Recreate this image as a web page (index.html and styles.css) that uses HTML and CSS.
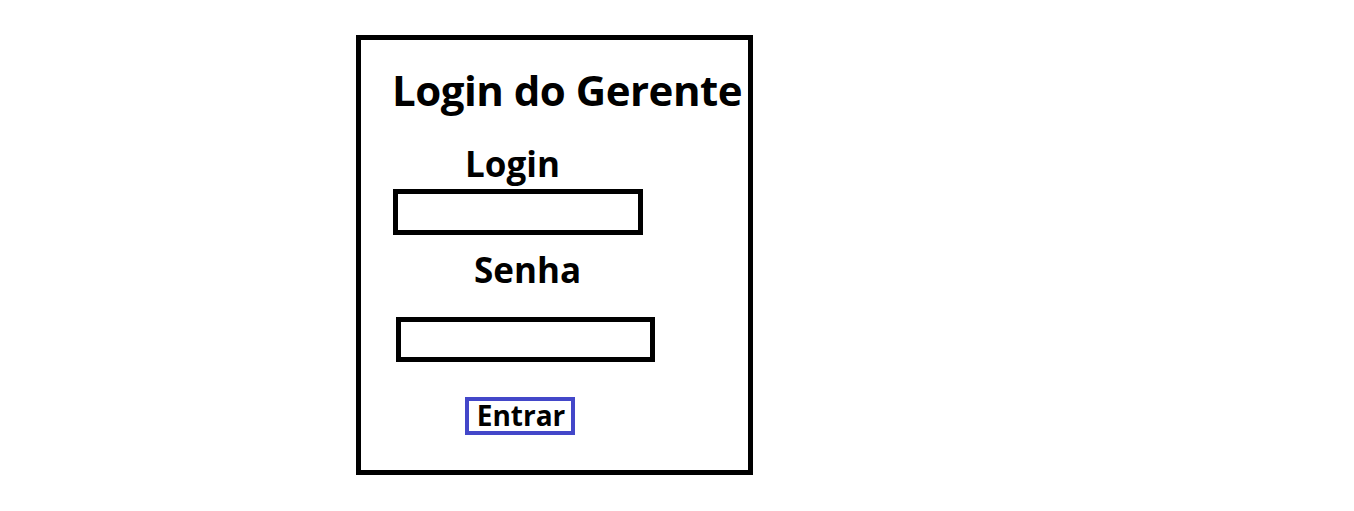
FILE: index.html
```html
<!DOCTYPE html>
<html lang="pt">
<head>
<meta charset="utf-8">
<title>Login do Gerente</title>
<link rel="stylesheet" href="styles.css">
</head>
<body>
<div class="card">
  <h1 class="title">Login do Gerente</h1>
  <div class="label label-login">Login</div>
  <div class="field field-login"></div>
  <div class="label label-senha">Senha</div>
  <div class="field field-senha"></div>
  <button class="btn" type="button">Entrar</button>
</div>
</body>
</html>
```

FILE: styles.css
```css
html, body {
  margin: 0;
  padding: 0;
  background: #fff;
}
body {
  font-family: "Open Sans", "Noto Sans", sans-serif;
  color: #000;
}
.card {
  box-sizing: border-box;
  margin: 35px 0 0 356px;
  width: 397px;
  height: 440px;
  border: 5px solid #000;
  display: flex;
  flex-direction: column;
  align-items: flex-start;
}
.title {
  margin: 29px 0 0 31px;
  font-size: 42px;
  line-height: 42px;
  font-weight: 700;
  letter-spacing: -0.5px;
  white-space: nowrap;
}
.label {
  font-size: 35px;
  line-height: 35px;
  font-weight: 700;
}
.label-login {
  margin: 35px 0 0 104px;
}
.label-senha {
  margin: 17px 0 0 113px;
}
.field {
  box-sizing: border-box;
  border: 5px solid #000;
  background: #fff;
}
.field-login {
  margin: 8px 0 0 32px;
  width: 250px;
  height: 46px;
}
.field-senha {
  margin: 30px 0 0 35px;
  width: 259px;
  height: 45px;
}
.btn {
  box-sizing: border-box;
  margin: 35px 0 0 104px;
  width: 110px;
  height: 38px;
  border: 4px solid #4347c9;
  background: #fff;
  padding: 0 0 5px 2px;
  font-family: inherit;
  font-size: 28px;
  line-height: 28px;
  font-weight: 700;
  color: #000;
}
```
